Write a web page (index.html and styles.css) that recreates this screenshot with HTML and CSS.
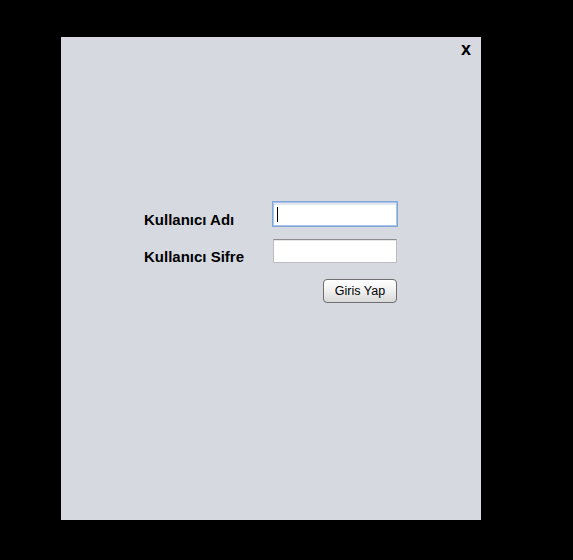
FILE: index.html
```html
<!DOCTYPE html>
<html>
<head>
<meta charset="utf-8">
<link rel="stylesheet" href="styles.css">
</head>
<body>
<div class="panel">
  <div class="titlebar"><span class="close">x</span></div>
  <div class="form">
    <div class="label">Kullanıcı Adı</div>
    <div class="field focused"><span class="caret"></span></div>
    <div class="label">Kullanıcı Sifre</div>
    <div class="field-wrap"><div class="field"></div></div>
    <div class="btn-row"><div class="button">Giris Yap</div></div>
  </div>
</div>
</body>
</html>
```
FILE: styles.css
```css
html, body {
  margin: 0;
  padding: 0;
  background: #000;
  width: 573px;
  height: 560px;
  overflow: hidden;
  font-family: "Liberation Sans", Arial, sans-serif;
}
.panel {
  box-sizing: border-box;
  width: 420px;
  height: 483px;
  margin: 37px 0 0 61px;
  background: #d6d9e0;
  display: flex;
  flex-direction: column;
}
.titlebar {
  display: flex;
  justify-content: flex-end;
  padding: 2px 10px 0 0;
  height: 20px;
}
.close {
  font-weight: bold;
  font-size: 18px;
  line-height: 20px;
  color: #000;
}
.form {
  display: grid;
  grid-template-columns: 128px 126px;
  grid-auto-rows: 26px;
  row-gap: 11px;
  margin: 142px 0 0 83px;
}
.label {
  font-weight: bold;
  font-size: 15px;
  line-height: 17px;
  padding-top: 10px;
  color: #000;
  white-space: nowrap;
}
.field {
  box-sizing: border-box;
  background: #fff;
  border: 1px solid #bcbcbc;
  border-top-color: #8e8e8e;
  box-shadow: inset 0 1px 0 #e4e4e4;
  height: 24px;
  width: 124px;
}
.field.focused {
  width: 126px;
  height: 26px;
  border: 1px solid #7ea6d9;
  box-shadow: inset 0 0 0 1px #a9c4e8, inset 0 2px 0 1px #e4e8ee;
  position: relative;
}
.caret {
  position: absolute;
  left: 4px;
  top: 5px;
  width: 1px;
  height: 15px;
  background: #000;
}
.field-wrap {
  padding: 1px;
}
.btn-row {
  grid-column: 2;
  display: flex;
  justify-content: flex-end;
  margin-top: 4px;
  margin-right: 1px;
  height: 24px;
}
.button {
  box-sizing: border-box;
  width: 74px;
  height: 24px;
  border: 1px solid #6e6e6e;
  border-radius: 4px;
  background: linear-gradient(#ffffff, #f2f2f2 45%, #d8d8d8);
  font-size: 12.5px;
  line-height: 22px;
  text-align: center;
  color: #000;
}
```
